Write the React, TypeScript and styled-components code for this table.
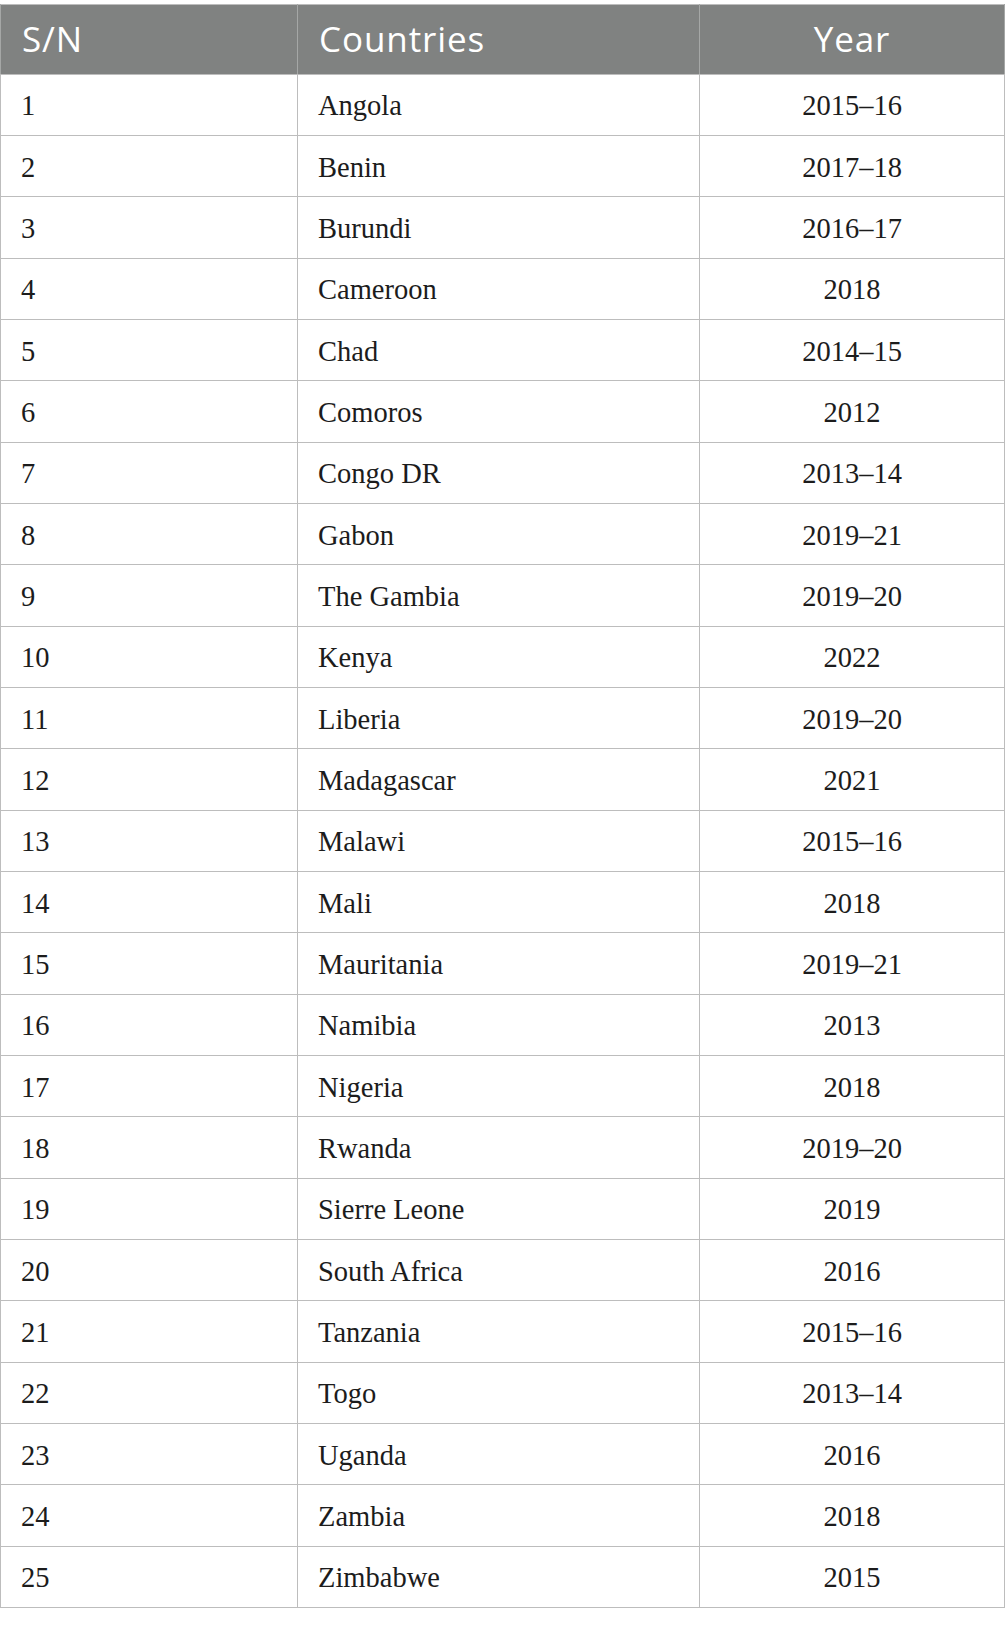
import styled, { createGlobalStyle } from "styled-components";

const rows: [string, string][] = [
  ["Angola", "2015–16"],
  ["Benin", "2017–18"],
  ["Burundi", "2016–17"],
  ["Cameroon", "2018"],
  ["Chad", "2014–15"],
  ["Comoros", "2012"],
  ["Congo DR", "2013–14"],
  ["Gabon", "2019–21"],
  ["The Gambia", "2019–20"],
  ["Kenya", "2022"],
  ["Liberia", "2019–20"],
  ["Madagascar", "2021"],
  ["Malawi", "2015–16"],
  ["Mali", "2018"],
  ["Mauritania", "2019–21"],
  ["Namibia", "2013"],
  ["Nigeria", "2018"],
  ["Rwanda", "2019–20"],
  ["Sierre Leone", "2019"],
  ["South Africa", "2016"],
  ["Tanzania", "2015–16"],
  ["Togo", "2013–14"],
  ["Uganda", "2016"],
  ["Zambia", "2018"],
  ["Zimbabwe", "2015"],
];

const GlobalStyle = createGlobalStyle`
  html, body {
    margin: 0;
    padding: 0;
    background: #ffffff;
  }
  body {
    padding-top: 4px;
  }
`;

export default function App() {
  return (
    <>
      <GlobalStyle />
      <Table>
        <colgroup>
          <col style={{ width: 297 }} />
          <col style={{ width: 402 }} />
          <col style={{ width: 305 }} />
        </colgroup>
        <thead>
          <tr>
            <Th>S/N</Th>
            <Th>Countries</Th>
            <Th $center>Year</Th>
          </tr>
        </thead>
        <tbody>
          {rows.map(([country, year], i) => (
            <tr key={country}>
              <Td>{i + 1}</Td>
              <Td>{country}</Td>
              <Td $center>{year}</Td>
            </tr>
          ))}
        </tbody>
      </Table>
    </>
  );
}

const Table = styled.table`
  width: 1004px;
  border-collapse: collapse;
  table-layout: fixed;
  border: 1.5px solid #bdbdbd;
`;

const Th = styled.th<{ $center?: boolean }>`
  box-sizing: border-box;
  height: 69.5px;
  padding: 0 0 2px ${(p) => (p.$center ? "0" : "21px")};
  background: #808281;
  color: #ffffff;
  font-family: "Open Sans", "Liberation Sans", sans-serif;
  font-size: 35px;
  font-weight: 400;
  letter-spacing: 0.9px;
  text-align: ${(p) => (p.$center ? "center" : "left")};
  border: 1.5px solid #a5a7a6;
  border-top: none;
  border-bottom: 1.5px solid #bdbdbd;
  vertical-align: middle;
`;

const Td = styled.td<{ $center?: boolean }>`
  box-sizing: border-box;
  height: 61.35px;
  padding: 3px 0 0 ${(p) => (p.$center ? "0" : "20px")};
  font-family: "Liberation Serif", "Times New Roman", serif;
  font-size: 28.5px;
  color: #1c1c1c;
  text-align: ${(p) => (p.$center ? "center" : "left")};
  border: 1.5px solid #bdbdbd;
  vertical-align: middle;
`;
